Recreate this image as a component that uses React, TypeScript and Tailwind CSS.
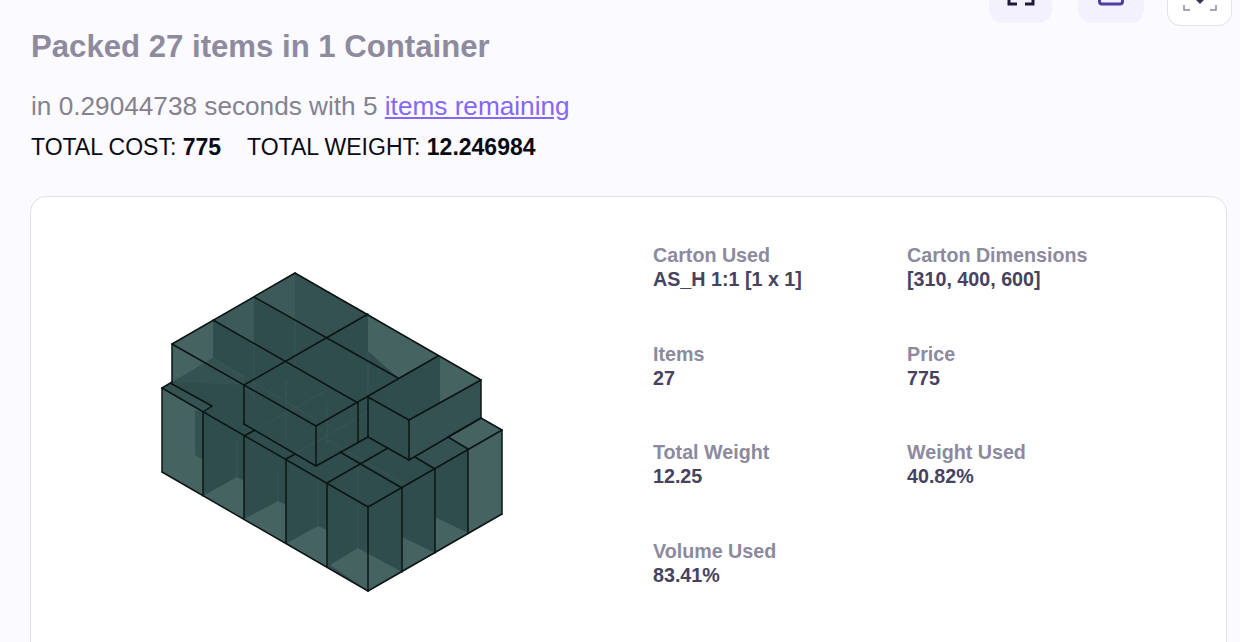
const DARK = "#2f4d4d";
const LIGHT = "#446361";
const MID = "#345251";
const SOFT = "#3b5a59";

const softs: string[] = [
  "213,320 254,297 254,344",
  "254,297 295,273 295,320",
];

const lights: string[] = [
  "162,388 203,412 203,496 162,472",
  "468,449 502,430 502,514 468,533",
  "448,437 481,418 502,430 468,449",
  "435,517 468,533 435,553",
  "402,537 435,553 402,572",
  "330,565 358,548 402,572 368,591",
  "327,567 287,543 318,526 327,530",
  "203,496 237,477 244,481 244,519",
  "244,519 278,501 286,505 286,543",
  "172,344 213,320 213,358 172,382",
  "368,314 438,356 398,378 368,351",
  "440,356 481,380 440,403",
];

const mids: string[] = [
  "172,382 213,358 244,376 244,385",
  "415,457 448,437 468,449 435,469",
  "440,403 481,380 481,420 409,460 409,420",
  "172,344 172,384 212,406 203,412 162,388 172,382",
  "295,273 368,314 327,337 295,320",
];

const shade: string[] = ["195,410 203,412 203,460 195,455"];

const faint: [number, number, number, number][] = [
  [254, 344, 254, 400],
  [295, 320, 295, 370],
  [286, 380, 286, 440],
  [327, 402, 327, 445],
  [368, 351, 368, 397],
  [435, 517, 435, 470],
  [402, 537, 402, 490],
  [237, 477, 237, 440],
  [278, 501, 278, 470],
  [318, 526, 318, 480],
  [358, 548, 358, 465],
  [327, 440, 409, 487],
  [213, 358, 316, 420],
  [254, 344, 358, 403],
  [255, 430, 327, 390],
  [295, 454, 368, 412],
];

const lines: [number, number, number, number][] = [
  [295, 273, 481, 380],
  [295, 273, 172, 344],
  [172, 344, 316, 426],
  [213, 320, 358, 403],
  [254, 297, 398, 378],
  [368, 314, 244, 385],
  [438, 356, 316, 426],
  [481, 380, 409, 420],
  [368, 397, 409, 420],
  [172, 344, 172, 384],
  [244, 385, 244, 424],
  [316, 426, 316, 466],
  [358, 403, 358, 442],
  [368, 397, 368, 437],
  [409, 420, 409, 460],
  [481, 380, 481, 418],
  [316, 466, 368, 437],
  [244, 424, 316, 466],
  [172, 384, 212, 406],
  [368, 437, 409, 460],
  [409, 460, 481, 418],
  [162, 388, 172, 382],
  [162, 388, 368, 507],
  [203, 412, 212, 406],
  [244, 436, 255, 430],
  [286, 459, 295, 454],
  [327, 483, 388, 448],
  [340, 452, 402, 488],
  [415, 457, 435, 469],
  [448, 437, 468, 449],
  [481, 418, 502, 430],
  [448, 437, 481, 418],
  [368, 507, 502, 430],
  [162, 388, 162, 472],
  [203, 412, 203, 496],
  [244, 436, 244, 519],
  [286, 459, 286, 543],
  [327, 483, 327, 567],
  [368, 507, 368, 591],
  [402, 488, 402, 572],
  [435, 469, 435, 553],
  [468, 449, 468, 533],
  [502, 430, 502, 514],
  [162, 472, 368, 591],
  [368, 591, 502, 514],
];

function Packing() {
  return (
    <svg width="622" height="445" viewBox="31 197 622 445" className="block shrink-0">
      <polygon
        points="162,388 172,382 172,344 295,273 481,380 481,418 502,430 502,514 368,591 162,472"
        fill={DARK}
      />
      {mids.map((p) => (
        <polygon key={p} points={p} fill={MID} />
      ))}
      {softs.map((p) => (
        <polygon key={p} points={p} fill={SOFT} />
      ))}
      {lights.map((p) => (
        <polygon key={p} points={p} fill={LIGHT} />
      ))}
      {shade.map((p) => (
        <polygon key={p} points={p} fill={MID} />
      ))}
      {faint.map(([a, b, c, d], i) => (
        <line key={i} x1={a} y1={b} x2={c} y2={d} stroke="#426160" strokeWidth="1" opacity="0.45" />
      ))}
      {lines.map(([a, b, c, d], i) => (
        <line key={i} x1={a} y1={b} x2={c} y2={d} stroke="#0c1414" strokeWidth="1.5" strokeLinecap="round" />
      ))}
    </svg>
  );
}

function Stat({ label, value }: { label: string; value: string }) {
  return (
    <div className="h-[98.5px]">
      <div className="text-[19.7px] leading-[24px] font-bold text-[#8c8a9e]">{label}</div>
      <div className="text-[19.7px] leading-[24px] font-bold text-[#47425f]">{value}</div>
    </div>
  );
}

export default function App() {
  return (
    <div
      className="h-[642px] overflow-hidden bg-[#fbfaff]"
      style={{ fontFamily: '"Liberation Sans", Arial, sans-serif' }}
    >
      <div className="flex h-[26px] items-end justify-end pr-[8px]">
        <div className="flex items-end">
          <div className="flex h-[23px] w-[63px] justify-center self-start rounded-b-[14px] bg-[#f3f1fe]">
            <svg width="30" height="6" viewBox="0 0 30 6" className="block">
              <path d="M3 0v4h8M19 4h8V0" fill="none" stroke="#1f1a3d" strokeWidth="3" />
            </svg>
          </div>
          <div className="ml-[26px] flex h-[23px] w-[66px] justify-center self-start rounded-b-[14px] bg-[#f3f1fe]">
            <svg width="26" height="6" viewBox="0 0 26 6" className="block">
              <path d="M1.5 0v1.5a2.5 2.5 0 0 0 2.5 2.5h18a2.5 2.5 0 0 0 2.5-2.5V0" fill="none" stroke="#4f3fa3" strokeWidth="3" />
            </svg>
          </div>
          <div className="ml-[23px] flex h-[26px] w-[65px] justify-center self-start rounded-b-[14px] border border-t-0 border-[#e4e3ea] bg-white">
            <svg width="36" height="12" viewBox="0 0 36 12" className="block">
              <path d="M2 5v5h6M28 10h6V5" fill="none" stroke="#8f8d9c" strokeWidth="1.5" />
              <path d="M14 0h8l-4 4z" fill="#3b3654" />
            </svg>
          </div>
        </div>
      </div>

      <div className="ml-[31px] mt-[3px] text-[31.15px] leading-[36px] font-bold text-[#8e8b9f]">
        Packed 27 items in 1 Container
      </div>
      <div className="ml-[31px] mt-[26px] text-[26.2px] leading-[30px] text-[#85828f]">
        in 0.29044738 seconds with 5 <a className="text-[#8468fb] underline">items remaining</a>
      </div>
      <div className="ml-[31px] mt-[11px] flex gap-[26px] text-[23px] leading-[30px] text-[#0a0a14]">
        <span>
          TOTAL COST: <b>775</b>
        </span>
        <span>
          TOTAL WEIGHT: <b>12.246984</b>
        </span>
      </div>

      <div className="ml-[30px] mr-[13px] mt-[34px] flex h-[480px] rounded-[16px] border border-[#e2e1e8] bg-white">
        <Packing />
        <div className="grid h-fit flex-1 grid-cols-[254px_1fr] pt-[46px]">
          <Stat label="Carton Used" value="AS_H 1:1 [1 x 1]" />
          <Stat label="Carton Dimensions" value="[310, 400, 600]" />
          <Stat label="Items" value="27" />
          <Stat label="Price" value="775" />
          <Stat label="Total Weight" value="12.25" />
          <Stat label="Weight Used" value="40.82%" />
          <Stat label="Volume Used" value="83.41%" />
        </div>
      </div>
    </div>
  );
}
